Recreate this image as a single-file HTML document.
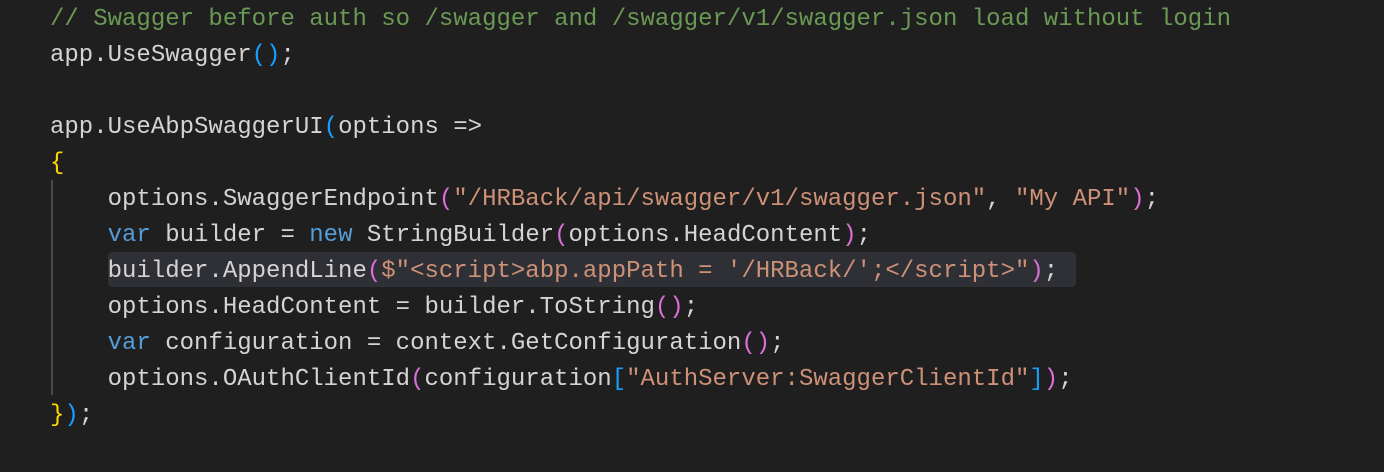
<!DOCTYPE html>
<html><head><style>
html,body{margin:0;padding:0;background:#1f1f1f;width:1384px;height:472px;overflow:hidden}
pre{margin:0;position:absolute;left:50px;top:2px;font-family:"Liberation Mono",monospace;font-size:24px;line-height:36px;color:#d4d4d4;letter-spacing:0}
.c{color:#6a9955}.s{color:#ce9178}.k{color:#569cd6}.y{color:#ffd700}.p{color:#da70d6}.b{color:#179fff}
.hl{position:absolute;left:108px;top:252px;width:968px;height:35px;background:#2f3035;border-radius:4px}
.g{position:absolute;left:51px;top:180px;width:2px;height:215px;background:#4a4a4a}
</style></head><body>
<div class="hl"></div><div class="g"></div>
<pre><span class="c">// Swagger before auth so /swagger and /swagger/v1/swagger.json load without login</span>
app.UseSwagger<span class="b">()</span>;

app.UseAbpSwaggerUI<span class="b">(</span>options =&gt;
<span class="y">{</span>
    options.SwaggerEndpoint<span class="p">(</span><span class="s">"/HRBack/api/swagger/v1/swagger.json"</span>, <span class="s">"My API"</span><span class="p">)</span>;
    <span class="k">var</span> builder = <span class="k">new</span> StringBuilder<span class="p">(</span>options.HeadContent<span class="p">)</span>;
    builder.AppendLine<span class="p">(</span><span class="s">$"&lt;script&gt;abp.appPath = '/HRBack/';&lt;/script&gt;"</span><span class="p">)</span>;
    options.HeadContent = builder.ToString<span class="p">()</span>;
    <span class="k">var</span> configuration = context.GetConfiguration<span class="p">()</span>;
    options.OAuthClientId<span class="p">(</span>configuration<span class="b">[</span><span class="s">"AuthServer:SwaggerClientId"</span><span class="b">]</span><span class="p">)</span>;
<span class="y">}</span><span class="b">)</span>;</pre>
</body></html>
